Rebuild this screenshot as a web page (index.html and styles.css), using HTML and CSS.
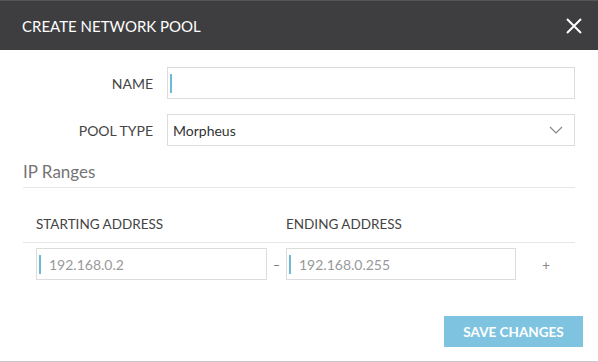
FILE: index.html
```html
<!DOCTYPE html>
<html>
<head>
<meta charset="utf-8">
<link rel="stylesheet" href="styles.css">
</head>
<body>
<div class="modal">
  <div class="header">
    <h1 class="title">CREATE NETWORK POOL</h1>
    <span class="close" aria-label="close">
      <svg width="16" height="16" viewBox="0 0 16 16"><path d="M1 1 L15 15 M15 1 L1 15" stroke="#fff" stroke-width="2" fill="none"/></svg>
    </span>
  </div>
  <div class="body">
    <div class="row">
      <label class="label">NAME</label>
      <div class="field"><span class="caret"></span></div>
    </div>
    <div class="row">
      <label class="label">POOL TYPE</label>
      <div class="field select">
        <span class="value">Morpheus</span>
        <svg class="chev" width="14" height="8" viewBox="0 0 14 8"><path d="M1 1 L7 7 L13 1" stroke="#888" stroke-width="1.2" fill="none"/></svg>
      </div>
    </div>
    <div class="section">IP Ranges</div>
    <div class="range-head">
      <span class="col-a">STARTING ADDRESS</span>
      <span class="col-b">ENDING ADDRESS</span>
    </div>
    <div class="range-row">
      <div class="ip"><span class="caret"></span><span class="ph">192.168.0.2</span></div>
      <span class="dash">–</span>
      <div class="ip ip-b"><span class="caret"></span><span class="ph">192.168.0.255</span></div>
      <span class="plus">+</span>
    </div>
    <div class="footer">
      <button class="save">SAVE CHANGES</button>
    </div>
  </div>
</div>
</body>
</html>
```

FILE: styles.css
```css
* { box-sizing: border-box; }
html, body { margin: 0; padding: 0; background: #fff; }
body { font-family: Lato, "Open Sans", sans-serif; width: 598px; height: 362px; overflow: hidden; }
.modal { width: 598px; height: 362px; border-bottom: 1px solid #c8c8c8; }
.header {
  height: 50px; background: #3e3e40; border-top: 1px solid #555;
  display: flex; align-items: center; justify-content: space-between;
  padding: 0 16px 0 22px;
}
.title { margin: 0; color: #fff; font-size: 15px; font-weight: 400; letter-spacing: 0; padding-top: 1px; }
.close { display: flex; width: 16px; height: 16px; }
.body { padding: 17px 23px 0 23px; }
.row { display: flex; align-items: center; height: 32px; margin-bottom: 15px; }
.label { width: 131px; text-align: right; padding-right: 1px; font-size: 14px; color: #444; }
.field {
  margin-left: 13px; flex: 1; height: 32px; border: 1px solid #dcdcdc;
  display: flex; align-items: center; padding-left: 2px;
}
.caret { width: 2px; height: 19px; background: #6fb8d6; display: inline-block; }
.select { padding: 0 11px 0 5px; justify-content: space-between; }
.value { font-size: 14px; color: #333; }
.section {
  font-size: 17px; line-height: 20px; color: #747474; padding-top: 1px; padding-bottom: 5px;
  border-bottom: 1px solid #e6e6e6;
}
.range-head {
  display: flex; padding: 28px 0 10px 13px; font-size: 13.5px; line-height: 16px; color: #444;
  border-bottom: 1px solid #e6e6e6;
}
.col-a { width: 250px; }
.range-row { display: flex; align-items: center; padding: 5px 0 0 13px; }
.ip {
  width: 231px; height: 32px; border: 1px solid #dcdcdc;
  display: flex; align-items: center; padding-left: 2px;
}
.ip-b { width: 230px; }
.ph { margin-left: 8px; font-size: 14px; color: #999; }
.dash { width: 19px; text-align: center; color: #666; font-size: 12px; }
.plus { margin-left: 26px; color: #8a8a8a; font-size: 14px; }
.footer { display: flex; justify-content: flex-end; padding-top: 36px; margin-right: -8px; }
.save {
  width: 139px; height: 31px; border: none; background: #7ec4e1; color: #fff;
  font-family: Lato, sans-serif; font-weight: 700; font-size: 13.5px; padding: 0;
}
```
